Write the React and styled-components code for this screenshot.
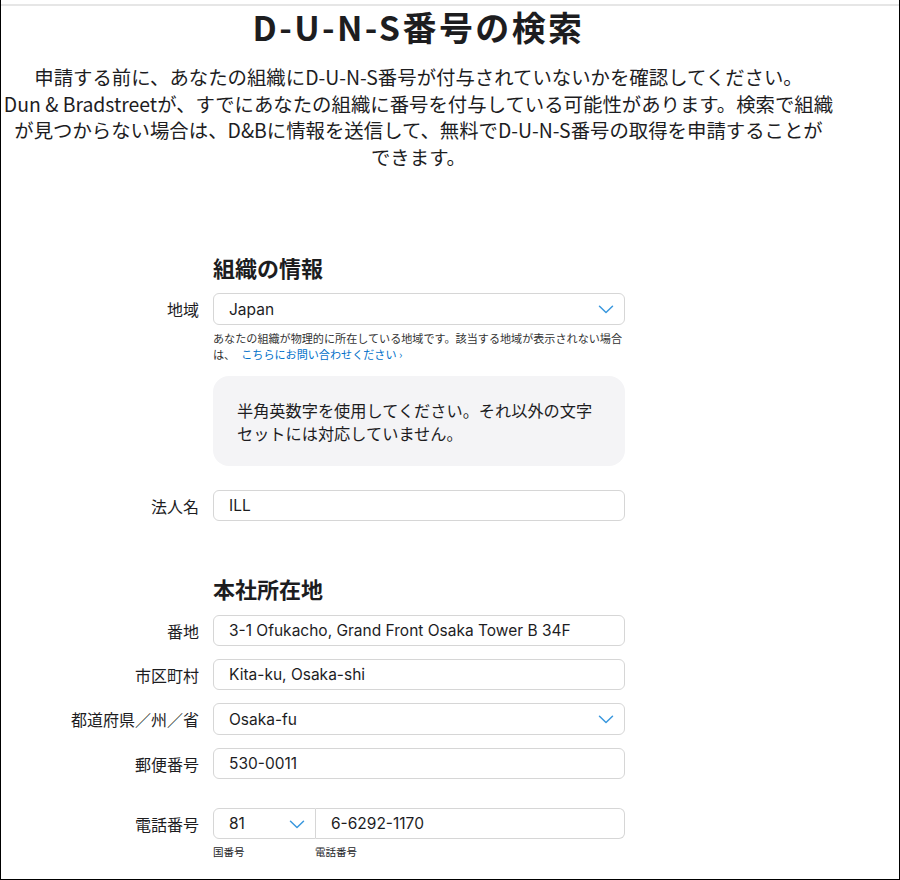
import React from 'react';
import styled, { createGlobalStyle } from 'styled-components';

const GlobalStyle = createGlobalStyle`
  html, body {
    margin: 0;
    padding: 0;
    background: #fff;
  }
  body {
    font-family: "Noto Sans CJK JP", "Noto Sans", sans-serif;
    color: #1d1d1f;
  }
`;

const Frame = styled.div`
  width: 900px;
  height: 880px;
  box-sizing: border-box;
  border-left: 1px solid #000;
  border-right: 1px solid #000;
  border-bottom: 1px solid #000;
  padding-top: 4px;
  overflow: hidden;
`;

const TopRule = styled.div`
  height: 2px;
  background: #e6e6e6;
`;

const Title = styled.h1`
  margin: 0;
  width: 835px;
  text-align: center;
  font-size: 34px;
  line-height: 42px;
  font-weight: 700;
  letter-spacing: 2.4px;
`;

const Intro = styled.p`
  margin: 16px 0 0;
  width: 835px;
  text-align: center;
  font-size: 19.4px;
  line-height: 26.5px;
  font-weight: 400;
`;

const Form = styled.div`
  display: flex;
  flex-direction: column;
`;

const SectionTitle = styled.h2`
  margin: ${p => p.$top}px 0 0 212px;
  font-size: 22px;
  line-height: 28px;
  font-weight: 700;
`;

const Row = styled.div`
  display: flex;
  align-items: center;
  gap: 14px;
  margin-top: ${p => p.$top}px;
`;

const Label = styled.div`
  width: 198px;
  text-align: right;
  font-size: 16px;
  color: #1d1d1f;
  white-space: nowrap;
`;

const Field = styled.div`
  position: relative;
  box-sizing: border-box;
  width: ${p => p.$width || 412}px;
  height: ${p => (p.$select ? 32 : 31)}px;
  border: 1px solid #d6d6d6;
  border-radius: ${p => p.$radius || '6px'};
  display: flex;
  align-items: center;
  padding: 0 15px;
  font-family: Inter, "Noto Sans", sans-serif;
  font-size: 15.5px;
  color: #1d1d1f;
  background: #fff;
  & + & {
    border-left: none;
  }
`;

const Chevron = styled.svg`
  position: absolute;
  right: 10px;
  top: 50%;
  margin-top: -4px;
`;

const Indent = styled.div`
  margin-left: 212px;
  width: 412px;
`;

const Help = styled.div`
  margin-top: 5px;
  font-size: 11.1px;
  line-height: 16px;
  color: #333;
  white-space: nowrap;
`;

const HelpLink = styled.a`
  color: #0070c9;
  text-decoration: none;
  margin-left: 6px;
`;

const Notice = styled.div`
  margin-top: 14px;
  box-sizing: border-box;
  height: 90px;
  border-radius: 16px;
  background: #f4f4f6;
  padding: 23px 24px 0;
  font-size: 16.2px;
  line-height: 22.5px;
  color: #1d1d1f;
`;

const Group = styled.div`
  display: flex;
`;

const SubLabels = styled.div`
  display: flex;
  margin: 6px 0 0 212px;
  font-size: 10.5px;
  line-height: 14px;
  color: #1d1d1f;
`;

const SubLabel = styled.div`
  width: ${p => p.$width}px;
`;

const Arrow = () => (
  <Chevron width="16" height="9" viewBox="0 0 16 9">
    <path d="M1.5 1.2 L8 7.5 L14.5 1.2" fill="none" stroke="#3a98de" strokeWidth="1.5" strokeLinecap="round" strokeLinejoin="round" />
  </Chevron>
);

const App = () => {
  return (
    <>
      <GlobalStyle />
      <Frame>
        <TopRule />
        <Title>D-U-N-S番号の検索</Title>
        <Intro>
          申請する前に、あなたの組織にD-U-N-S番号が付与されていないかを確認してください。<br />
          Dun &amp; Bradstreetが、すでにあなたの組織に番号を付与している可能性があります。検索で組織<br />
          が見つからない場合は、D&amp;Bに情報を送信して、無料でD-U-N-S番号の取得を申請することが<br />
          できます。
        </Intro>
        <Form>
          <SectionTitle $top={83}>組織の情報</SectionTitle>
          <Row $top={12}>
            <Label>地域</Label>
            <Field $select>Japan<Arrow /></Field>
          </Row>
          <Indent>
            <Help>
              あなたの組織が物理的に所在している地域です。該当する地域が表示されない場合<br />
              は、<HelpLink href="#">こちらにお問い合わせください ›</HelpLink>
            </Help>
            <Notice>
              半角英数字を使用してください。それ以外の文字<br />
              セットには対応していません。
            </Notice>
          </Indent>
          <Row $top={24}>
            <Label>法人名</Label>
            <Field>ILL</Field>
          </Row>

          <SectionTitle $top={53}>本社所在地</SectionTitle>
          <Row $top={13}>
            <Label>番地</Label>
            <Field>3-1 Ofukacho, Grand Front Osaka Tower B 34F</Field>
          </Row>
          <Row $top={13}>
            <Label>市区町村</Label>
            <Field>Kita-ku, Osaka-shi</Field>
          </Row>
          <Row $top={13}>
            <Label>都道府県／州／省</Label>
            <Field $select>Osaka-fu<Arrow /></Field>
          </Row>
          <Row $top={13}>
            <Label>郵便番号</Label>
            <Field>530-0011</Field>
          </Row>
          <Row $top={29}>
            <Label>電話番号</Label>
            <Group>
              <Field $width={103} $radius="6px 0 0 6px">81<Arrow /></Field>
              <Field $width={309} $radius="0 6px 6px 0">6-6292-1170</Field>
            </Group>
          </Row>
          <SubLabels>
            <SubLabel $width={102}>国番号</SubLabel>
            <SubLabel>電話番号</SubLabel>
          </SubLabels>
        </Form>
      </Frame>
    </>
  );
};

export default App;
